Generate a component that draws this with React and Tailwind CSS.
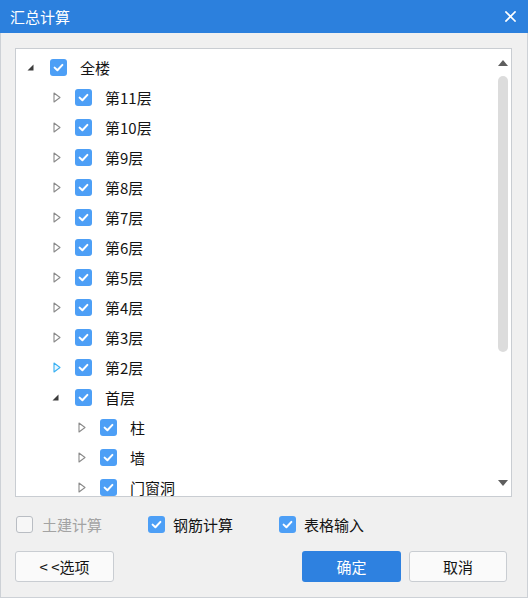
import React from 'react'

const tree = [
  { label: '全楼', level: 0, open: true },
  { label: '第11层', level: 1 },
  { label: '第10层', level: 1 },
  { label: '第9层', level: 1 },
  { label: '第8层', level: 1 },
  { label: '第7层', level: 1 },
  { label: '第6层', level: 1 },
  { label: '第5层', level: 1 },
  { label: '第4层', level: 1 },
  { label: '第3层', level: 1 },
  { label: '第2层', level: 1, hover: true },
  { label: '首层', level: 1, open: true },
  { label: '柱', level: 2 },
  { label: '墙', level: 2 },
  { label: '门窗洞', level: 2 },
]

function Check({ checked = true }) {
  if (!checked) {
    return <span className="w-[17px] h-[17px] shrink-0 rounded-[3px] border border-[#b9bdc3] bg-[#f7f7f7]" />
  }
  return (
    <span className="w-[17px] h-[17px] shrink-0 rounded-[3px] bg-[#4d9ff6] flex items-center justify-center">
      <svg width="17" height="17" viewBox="0 0 17 17">
        <path d="M4.6 8.6 L7.4 11.3 L12.4 5.9" fill="none" stroke="#fff" strokeWidth="2" strokeLinecap="round" strokeLinejoin="round" />
      </svg>
    </span>
  )
}

function Expander({ open, hover }) {
  if (open) {
    return (
      <svg width="7" height="7" viewBox="0 0 7 7" className="ml-[1px] mt-[1px]">
        <polygon points="6.5,0.5 6.5,6.5 0.5,6.5" fill="#3c3c3c" />
      </svg>
    )
  }
  return (
    <svg width="8" height="11" viewBox="0 0 8 11" className="ml-[3px]">
      <polygon
        points="1,1 7,5.5 1,10"
        fill={hover ? '#e8f6ff' : 'none'}
        stroke={hover ? '#38b0f2' : '#8a8a8a'}
        strokeWidth="1.1"
        strokeLinejoin="round"
      />
    </svg>
  )
}

function Row({ item }) {
  const pad = ['pl-[4px]', 'pl-[29px]', 'pl-[54px]'][item.level]
  return (
    <div className={`h-[30px] flex items-center ${pad}`}>
      <span className="w-[20px] h-[20px] flex items-center justify-center shrink-0">
        <Expander open={item.open} hover={item.hover} />
      </span>
      <span className="ml-[10px]">
        <Check />
      </span>
      <span className="ml-[13px] text-[15px] leading-none text-[#141414] whitespace-nowrap">{item.label}</span>
    </div>
  )
}

export default function App() {
  return (
    <div
      className="w-[528px] h-[598px] bg-[#f0f0f0] border-x border-b border-[#cdd1d6] flex flex-col select-none"
      style={{ fontFamily: '"Noto Sans CJK SC", "Noto Sans", sans-serif' }}
    >
      {/* 标题栏 */}
      <div className="h-[33px] -mx-px bg-[#2c80dd] flex items-center justify-between pl-[10px] pr-[12px] shrink-0">
        <span className="text-white text-[15px] leading-none">汇总计算</span>
        <svg width="11" height="11" viewBox="0 0 11 11">
          <path d="M1 1 L10 10 M10 1 L1 10" stroke="#fff" strokeWidth="1.7" strokeLinecap="square" />
        </svg>
      </div>

      {/* 楼层树 */}
      <div className="mt-[15px] ml-[14px] w-[497px] h-[449px] bg-white border border-[#c9cdd2] flex overflow-hidden shrink-0">
        <div className="flex-1 pt-[3px] overflow-hidden">
          {tree.map(item => (
            <Row key={item.label} item={item} />
          ))}
        </div>
        <div className="w-[10px] mr-[3px] flex flex-col items-center pt-[11px] pb-[10px]">
          <svg width="10" height="6" viewBox="0 0 10 6">
            <polygon points="5,0 10,6 0,6" fill="#5e5e5e" />
          </svg>
          <div className="mt-[10px] w-[10px] h-[276px] rounded-full bg-[#dcdcdc]" />
          <div className="flex-1" />
          <svg width="10" height="6" viewBox="0 0 10 6">
            <polygon points="0,0 10,0 5,6" fill="#5e5e5e" />
          </svg>
        </div>
      </div>

      {/* 选项 */}
      <div className="mt-[18px] h-[18px] flex items-center pl-[15px] text-[15px] leading-none">
        <label className="w-[132px] flex items-center gap-[9px]">
          <Check checked={false} />
          <span className="text-[#a3a3a3]">土建计算</span>
        </label>
        <label className="w-[131px] flex items-center gap-[8px]">
          <Check />
          <span className="text-[#141414]">钢筋计算</span>
        </label>
        <label className="flex items-center gap-[8px]">
          <Check />
          <span className="text-[#141414]">表格输入</span>
        </label>
      </div>

      {/* 按钮 */}
      <div className="mt-[18px] h-[31px] flex pl-[14px] pr-[20px] text-[15px] leading-none">
        <button className="w-[99px] h-full rounded-[3px] border border-[#c9cdd2] bg-[#fafafa] text-[#141414]">
          &lt; &lt;选项
        </button>
        <div className="flex-1" />
        <button className="w-[99px] h-full rounded-[3px] bg-[#2e81e0] text-white">确定</button>
        <button className="ml-[8px] w-[98px] h-full rounded-[3px] border border-[#c9cdd2] bg-[#fafafa] text-[#141414]">
          取消
        </button>
      </div>
    </div>
  )
}
